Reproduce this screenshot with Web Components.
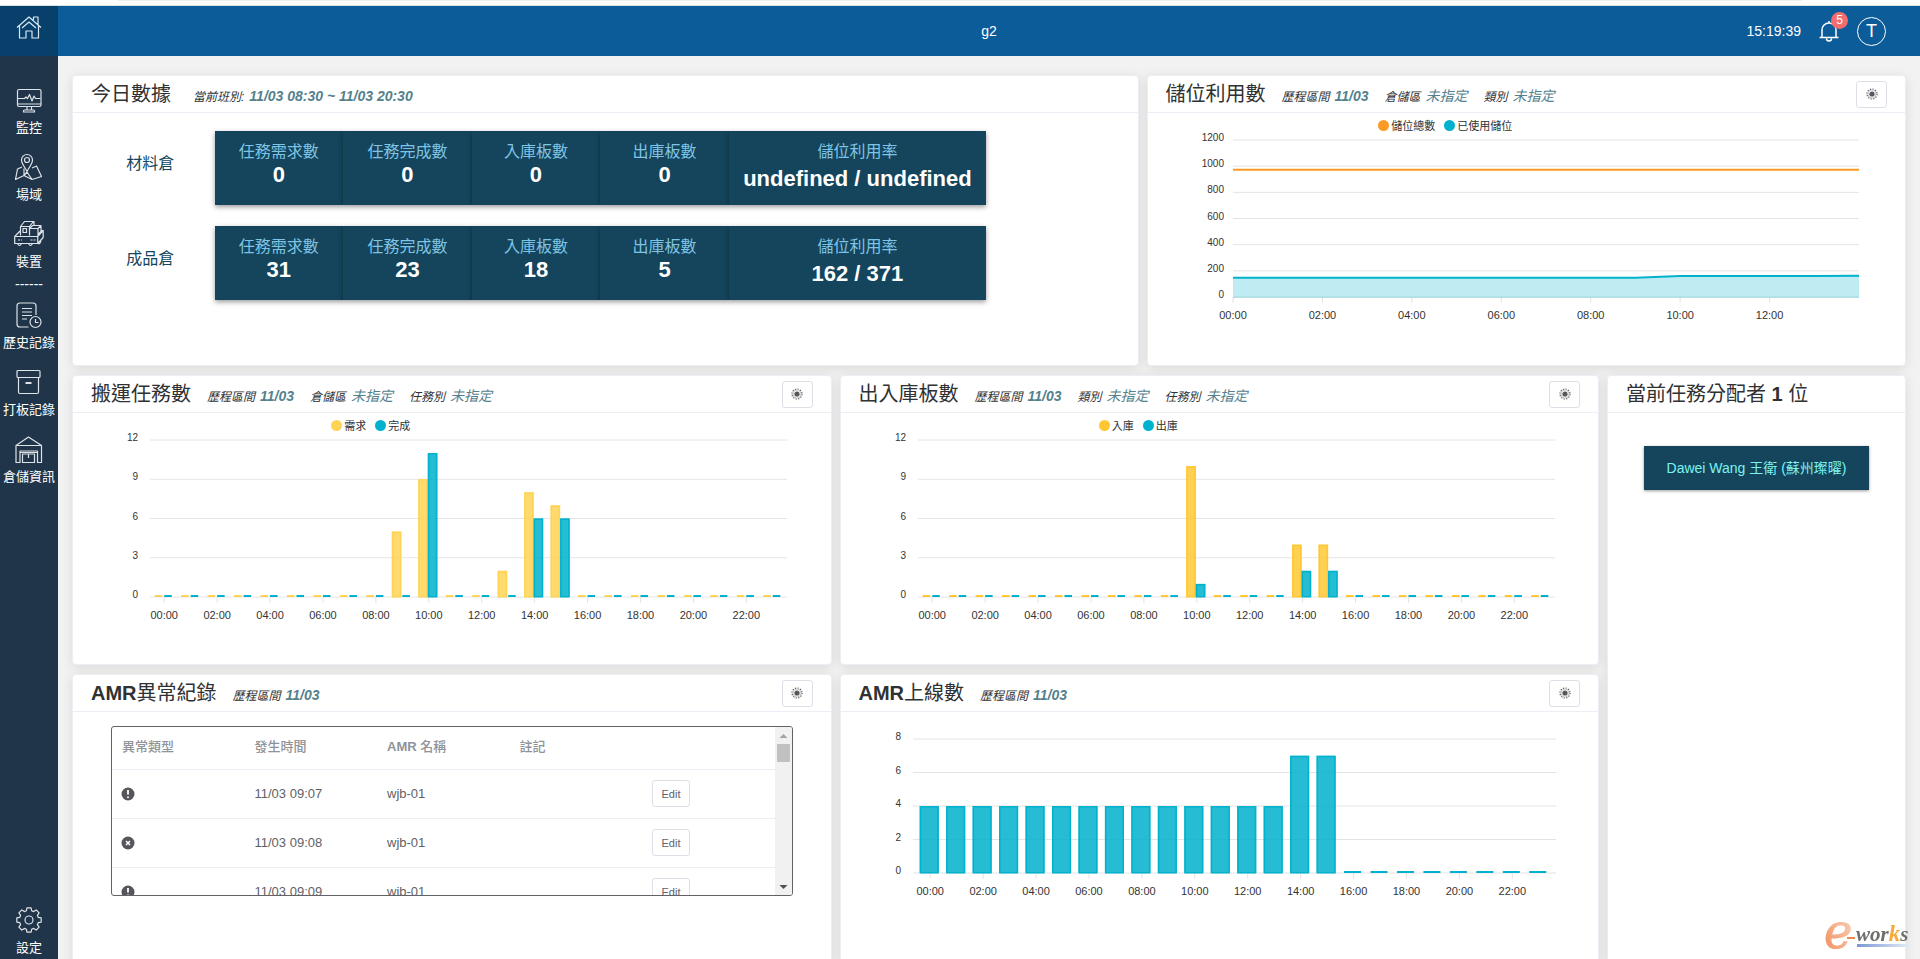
<!DOCTYPE html>
<html lang="zh-Hant">
<head>
<meta charset="utf-8">
<title>g2</title>
<style>
  html, body {
    margin: 0;
    height: 100%;
  }

  body {
    font-family: "Liberation Sans", "Noto Sans CJK TC", sans-serif;
    font-size: 14px;
    color: #303133;
    background: #f2f2f2;
    overflow: hidden;
  }
</style>
</head>
<body>

<app-shell>
  <app-header slot="header" heading="g2" time="15:19:39" alerts="5" user="T"></app-header>

  <side-nav slot="nav"></side-nav>

  <dash-card style="grid-column: span 14">
    <span slot="title">今日數據</span>
    <meta-item slot="meta" label="當前班別:" first><b>11/03 08:30 ~ 11/03 20:30</b></meta-item>
    <stat-board>
      <stat-row name="材料倉" demand="0" done="0" inbound="0" outbound="0" usage="undefined / undefined"></stat-row>
      <stat-row name="成品倉" demand="31" done="23" inbound="18" outbound="5" usage="162 / 371"></stat-row>
    </stat-board>
  </dash-card>

  <dash-card style="grid-column: span 10" filter>
    <span slot="title">儲位利用數</span>
    <meta-item slot="meta" label="歷程區間"><b>11/03</b></meta-item>
    <meta-item slot="meta" label="倉儲區">未指定</meta-item>
    <meta-item slot="meta" label="類別">未指定</meta-item>
    <line-chart max="1200" step="200" left="85" right="47" series='[
      {"name":"儲位總數","color":"#fb9a24","data":[973,973,973,973,973,973,973,973,973,973,973,973,973,973,973]},
      {"name":"已使用儲位","color":"#00b2cd","area":true,"data":[148,148,148,148,148,148,148,148,148,148,160,160,160,160,162]}
    ]'></line-chart>
  </dash-card>

  <dash-card style="grid-column: span 10" filter>
    <span slot="title">搬運任務數</span>
    <meta-item slot="meta" label="歷程區間"><b>11/03</b></meta-item>
    <meta-item slot="meta" label="倉儲區">未指定</meta-item>
    <meta-item slot="meta" label="任務別">未指定</meta-item>
    <bar-chart max="12" step="3" left="77" right="44" pad="1" series='[
      {"name":"需求","color":"#ffd355","data":[0,0,0,0,0,0,0,0,0,5,9,0,0,2,8,7,0,0,0,0,0,0,0,0]},
      {"name":"完成","color":"#00b2cd","data":[0,0,0,0,0,0,0,0,0,0,11,0,0,0,6,6,0,0,0,0,0,0,0,0]}
    ]'></bar-chart>
  </dash-card>

  <dash-card style="grid-column: span 10" filter>
    <span slot="title">出入庫板數</span>
    <meta-item slot="meta" label="歷程區間"><b>11/03</b></meta-item>
    <meta-item slot="meta" label="類別">未指定</meta-item>
    <meta-item slot="meta" label="任務別">未指定</meta-item>
    <bar-chart max="12" step="3" left="77" right="44" pad="1" series='[
      {"name":"入庫","color":"#ffc832","data":[0,0,0,0,0,0,0,0,0,0,10,0,0,0,4,4,0,0,0,0,0,0,0,0]},
      {"name":"出庫","color":"#00b2cd","data":[0,0,0,0,0,0,0,0,0,0,1,0,0,0,2,2,0,0,0,0,0,0,0,0]}
    ]'></bar-chart>
  </dash-card>

  <dash-card style="grid-column: span 4; grid-row: span 2">
    <span slot="title">當前任務分配者 <b>1</b> 位</span>
    <user-chip>Dawei Wang 王衛 (蘇州璨曜)</user-chip>
  </dash-card>

  <dash-card style="grid-column: span 10" filter>
    <span slot="title"><b>AMR</b>異常紀錄</span>
    <meta-item slot="meta" label="歷程區間"><b>11/03</b></meta-item>
    <error-table></error-table>
  </dash-card>

  <dash-card style="grid-column: span 10" filter>
    <span slot="title"><b>AMR</b>上線數</span>
    <meta-item slot="meta" label="歷程區間"><b>11/03</b></meta-item>
    <bar-chart max="8" step="2" left="72" right="43" pad="4" plot="134" nolegend series='[
      {"name":"AMR","color":"#00b2cd","data":[4,4,4,4,4,4,4,4,4,4,4,4,4,4,7,7,0,0,0,0,0,0,0,0]}
    ]'></bar-chart>
  </dash-card>

  <brand-mark slot="mark"></brand-mark>
</app-shell>

<script>
  // 8-tooth cog outline around (14, 14)
  function gearPath() {
    const pts = [];
    for (let i = 0; i < 8; i++) {
      const a = i * Math.PI / 4 - Math.PI / 2;
      [[-0.27, 9.6], [-0.17, 12.4], [0.17, 12.4], [0.27, 9.6]].forEach(([d, r]) => {
        pts.push((14 + r * Math.cos(a + d)).toFixed(1) + ' ' + (14 + r * Math.sin(a + d)).toFixed(1));
      });
    }
    return 'M' + pts.join('L') + 'z';
  }

  const ICONS = {
    home: '<path d="M2 14.500 14 4l12 10.500M4.500 12.500V25h6.500v-7h6v7h6.500V12.500M7 15l7-6 7 6M18.500 7V4h4.500v7.500"/>',
    monitor: '<rect x="2.500" y="3.500" width="23.500" height="17" rx="1.500"/><path d="M2.500 18h23.500M2.500 12.500h7l1.500-1.500 1.500 1.500 2-4 2.500 6.500 2-5 1.500 2.500h5M12 20.500v3.500M16.500 20.500v3.500M8.500 26v-1q0-1 1-1h9q1 0 1 1v1z"/>',
    map: '<path d="M12 18.500C10 14 6.500 11 6.500 7a5.500 5.500 0 0 1 11 0c0 4-3.500 7-5.500 11.500z"/><circle cx="12" cy="7" r="2.500"/><path d="M7 14l-4.500 2L.500 26.500 9 22.500l8 4 9.500-3-5-10.500-4.500 2M9 15.500v7M12 19l5 7.500M12 19l-3 3.500"/>',
    agv: '<path d="M0.700 16.500h23v7h-23zM0.700 16.500 6 11M23.700 16.500l5.500-6v7l-5.500 6M26.500 10.500h2.700M6.500 15.500v-9l4-5h9.500v4M6.500 6.500h9v9M15.500 6.500l4-5M9 8.500h3.500v4H9zM15.500 8.500h8.500v7M15.500 8.500l3-3H27v6l-3 3M24 8.500l3-3M4 20h2M7 20h1M16.500 20h2M19.500 20h2"/><path d="M3.500 23.500q2 4 4 0M14.500 23.500q2 4 4 0M24 23.500q2 1 3-3"/>',
    history: '<path d="M13.500 26H5q-3 0-3-3V5q0-3 3-3h13q3 0 3 3v9M7 7.500h10M7 11h10M7 14.500h10M7 18h5"/><circle cx="20.500" cy="21" r="5.500"/><path d="M20.500 18v3.500h3"/>',
    archive: '<rect x="2" y="2.500" width="23" height="7" rx="1"/><path d="M3.500 9.500V24q0 1.500 1.500 1.500h17q1.500 0 1.500-1.500V9.500"/><path d="M10.500 15h6" stroke-width="2"/>',
    warehouse: '<path d="M1 10.500 13.500 2 26.500 10.500V27.500h-4V16H5v11.500H1zM1 10.500h25.500M7.500 27.500V19h12v8.500zM13.500 19v4M5 17.500h17.500"/>',
    gear: '<path d="' + gearPath() + '"/><circle cx="14" cy="14" r="4"/>'
  };

  function icon(name, width = 28) {
    return `<svg width="${width}" height="28" viewBox="0 0 ${width} 28" fill="none" stroke="currentColor" stroke-width="1.2" stroke-linejoin="round" aria-hidden="true">${ICONS[name]}</svg>`;
  }

  class AppShell extends HTMLElement {
    constructor() {
      super();
      this.attachShadow({ mode: 'open' });
      this.shadowRoot.innerHTML = `
        <style>
          :host {
            display: flex;
            flex-direction: column;
            height: 100vh;
          }

          .strip {
            height: 5px;
            padding: 0 118px;
            background: #fff;
            border-bottom: 1px solid #d5e4e2;
          }

          .strip i {
            display: block;
            height: 1px;
            background: #efefef;
          }

          .body {
            flex: 1;
            min-height: 0;
            display: flex;
          }

          main {
            flex: 1;
            min-width: 0;
            overflow: hidden;
            padding: 19px 14px;
            display: grid;
            grid-template-columns: repeat(24, minmax(0, 1fr));
            grid-template-rows: 291px 290px;
            grid-auto-rows: 290px;
            gap: 9px 8px;
          }
        </style>
        <div class="strip"><i></i></div>
        <slot name="header"></slot>
        <div class="body">
          <slot name="nav"></slot>
          <main><slot></slot></main>
        </div>
        <slot name="mark"></slot>
      `;
    }
  }

  class AppHeader extends HTMLElement {
    constructor() {
      super();
      this.attachShadow({ mode: 'open' });
    }

    connectedCallback() {
      this.shadowRoot.innerHTML = `
        <style>
          :host {
            display: flex;
            height: 50px;
            color: #fff;
            background: #0c5c99;
          }

          .home {
            width: 58px;
            display: flex;
            justify-content: center;
            padding-top: 7px;
            box-sizing: border-box;
            color: #dbe7f0;
            background: #08406c;
          }

          .bar {
            flex: 1;
            display: grid;
            grid-template-columns: 1fr auto 1fr;
            align-items: center;
          }

          h1 {
            grid-column: 2;
            margin: 0;
            font-size: 14px;
            font-weight: normal;
          }

          .tools {
            display: flex;
            align-items: center;
            justify-content: flex-end;
            gap: 18px;
            padding-right: 34px;
          }

          button {
            padding: 0;
            border: 0;
            color: inherit;
            font: inherit;
            background: none;
            cursor: pointer;
          }

          .bell {
            position: relative;
            width: 20px;
            height: 22px;
          }

          .bell svg {
            display: block;
          }

          .badge {
            position: absolute;
            left: 12px;
            top: -8px;
            width: 17px;
            height: 17px;
            border-radius: 50%;
            font-size: 12px;
            line-height: 17px;
            text-align: center;
            background: #f56c6c;
          }

          .user {
            width: 29px;
            height: 29px;
            border: 1px solid #fff;
            border-radius: 50%;
            font-size: 18px;
          }
        </style>
        <a class="home" href="#" aria-label="Home">${icon('home')}</a>
        <div class="bar">
          <h1>${this.getAttribute('heading')}</h1>
          <div class="tools">
            <time>${this.getAttribute('time')}</time>
            <button class="bell" aria-label="Alerts">
              <svg width="20" height="22" viewBox="0 0 20 22" fill="none" stroke="#fff" stroke-width="1.5">
                <path d="M0.500 17.500h19M3 17.500V10a7 7 0 0 1 14 0v7.500M10 3V1M7.500 18.500a2.500 2.500 0 0 0 5 0"/>
              </svg>
              <span class="badge">${this.getAttribute('alerts')}</span>
            </button>
            <button class="user">${this.getAttribute('user')}</button>
          </div>
        </div>
      `;
    }
  }

  class NavItem extends HTMLElement {
    constructor() {
      super();
      this.attachShadow({ mode: 'open' });
    }

    connectedCallback() {
      const name = this.getAttribute('icon');
      this.shadowRoot.innerHTML = `
        <style>
          :host {
            display: block;
          }

          a {
            display: flex;
            flex-direction: column;
            align-items: center;
            gap: 5px;
            color: #fff;
            font-size: 13px;
            line-height: 17px;
            white-space: nowrap;
            text-decoration: none;
          }

          svg {
            color: #dde3e8;
          }
        </style>
        <a href="#">${icon(name, name === 'agv' ? 30 : 28)}<span><slot></slot></span></a>
      `;
    }
  }

  class SideNav extends HTMLElement {
    constructor() {
      super();
      this.attachShadow({ mode: 'open' });
      this.shadowRoot.innerHTML = `
        <style>
          :host {
            display: flex;
            flex-direction: column;
            width: 58px;
            box-sizing: border-box;
            padding: 30px 0 3px;
            color: #fff;
            background: #203549;
          }

          .group {
            display: flex;
            flex-direction: column;
            gap: 17px;
          }

          .divider {
            height: 31px;
            line-height: 29px;
            text-align: center;
          }

          .bottom {
            margin-top: auto;
          }
        </style>
        <nav class="group">
          <nav-item icon="monitor">監控</nav-item>
          <nav-item icon="map">場域</nav-item>
          <nav-item icon="agv">裝置</nav-item>
        </nav>
        <div class="divider">------</div>
        <nav class="group">
          <nav-item icon="history">歷史記錄</nav-item>
          <nav-item icon="archive">打板記錄</nav-item>
          <nav-item icon="warehouse">倉儲資訊</nav-item>
        </nav>
        <nav-item class="bottom" icon="gear">設定</nav-item>
      `;
    }
  }

  class DashCard extends HTMLElement {
    constructor() {
      super();
      this.attachShadow({ mode: 'open' });
      const filter = this.hasAttribute('filter') ? `
        <button aria-label="Filter">
          <svg width="12" height="12" viewBox="0 0 12 12" fill="none" stroke="#606266">
            <circle cx="6" cy="6" r="5" stroke-width="1.2" stroke-dasharray="1.3 1.3"/>
            <circle cx="6" cy="6" r="4" stroke="#a5a7aa" stroke-width="0.6"/>
            <circle cx="6" cy="6" r="2.6" fill="#55575a" stroke="none"/>
          </svg>
        </button>` : '';
      this.shadowRoot.innerHTML = `
        <style>
          :host {
            display: flex;
            flex-direction: column;
            box-sizing: border-box;
            border: 1px solid #ebeef5;
            border-radius: 4px;
            background: #fff;
            box-shadow: 0 2px 12px rgba(0, 0, 0, 0.1);
          }

          header {
            display: flex;
            align-items: center;
            height: 36px;
            padding: 0 18px;
            border-bottom: 1px solid #ebeef5;
          }

          .text {
            flex: 1;
            display: flex;
            align-items: baseline;
            gap: 16px;
          }

          h2 {
            margin: 0;
            font-size: 20px;
            font-weight: normal;
            line-height: 34px;
          }

          button {
            display: flex;
            align-items: center;
            justify-content: center;
            width: 31px;
            height: 27px;
            padding: 0;
            border: 1px solid #dcdfe6;
            border-radius: 3px;
            background: #fff;
            cursor: pointer;
          }
        </style>
        <header>
          <div class="text">
            <h2><slot name="title"></slot></h2>
            <slot name="meta"></slot>
          </div>
          ${filter}
        </header>
        <slot></slot>
      `;
    }
  }

  class MetaItem extends HTMLElement {
    constructor() {
      super();
      this.attachShadow({ mode: 'open' });
      this.shadowRoot.innerHTML = `
        <style>
          :host {
            display: flex;
            align-items: baseline;
            gap: 5px;
            font-style: italic;
            white-space: nowrap;
          }

          :host([first]) {
            margin-left: 6px;
          }

          .label {
            font-size: 12px;
          }

          .value {
            color: #54818d;
          }
        </style>
        <span class="label">${this.getAttribute('label')}</span>
        <span class="value"><slot></slot></span>
      `;
    }
  }

  class StatBoard extends HTMLElement {
    constructor() {
      super();
      this.attachShadow({ mode: 'open' });
      this.shadowRoot.innerHTML = `
        <style>
          :host {
            display: flex;
            flex-direction: column;
            gap: 21px;
            max-width: 900px;
            padding: 18px 13px;
          }
        </style>
        <slot></slot>
      `;
    }
  }

  class StatRow extends HTMLElement {
    constructor() {
      super();
      this.attachShadow({ mode: 'open' });
    }

    connectedCallback() {
      const cells = [
        ['任務需求數', 'demand'],
        ['任務完成數', 'done'],
        ['入庫板數', 'inbound'],
        ['出庫板數', 'outbound'],
        ['儲位利用率', 'usage']
      ];
      this.shadowRoot.innerHTML = `
        <style>
          :host {
            display: grid;
            grid-template-columns: repeat(5, minmax(0, 1fr)) minmax(0, 2fr);
            text-align: center;
            font-size: 16px;
          }

          .name {
            line-height: 66px;
            color: #14455c;
          }

          .cell {
            height: 64px;
            padding-top: 10px;
            line-height: 22px;
            color: #7fc4e4;
            background: #14455c;
            box-shadow: 0 2px 5px rgba(0, 0, 0, 0.4);
            white-space: nowrap;
          }

          .cell b {
            display: block;
            font-size: 22px;
            line-height: 24px;
            color: #fff;
          }

          .usage b {
            line-height: 32px;
          }
        </style>
        <span class="name">${this.getAttribute('name')}</span>
        ${cells.map(([label, key]) => `<div class="cell ${key}">${label}<b>${this.getAttribute(key)}</b></div>`).join('')}
      `;
    }
  }

  // Shared frame for both charts: legend, grid lines, y and x labels
  class BaseChart extends HTMLElement {
    constructor() {
      super();
      this.attachShadow({ mode: 'open' });
    }

    connectedCallback() {
      this.series = JSON.parse(this.getAttribute('series'));
      const items = this.hasAttribute('nolegend') ? [] : this.series;
      this.shadowRoot.innerHTML = `
        <style>
          :host {
            display: block;
            font-size: 11px;
          }

          .legend {
            display: flex;
            justify-content: center;
            align-items: center;
            gap: 9px;
            height: 24px;
            padding-right: 162px;
          }

          .legend span {
            display: flex;
            align-items: center;
            gap: 2px;
          }

          .legend i {
            width: 11px;
            height: 11px;
            border-radius: 50%;
          }

          svg {
            display: block;
            width: 100%;
            height: 200px;
            overflow: visible;
          }

          text {
            fill: #333;
          }

          .y {
            font-size: 10px;
            text-anchor: end;
          }

          .x {
            text-anchor: middle;
          }
        </style>
        <div class="legend">
          ${items.map(s => `<span><i style="background: ${s.color}"></i>${s.name}</span>`).join('')}
        </div>
        <svg></svg>
      `;
      this.draw();
      this.observer = new ResizeObserver(() => this.draw());
      this.observer.observe(this);
    }

    disconnectedCallback() {
      this.observer.disconnect();
    }

    num(name, fallback = 0) {
      return this.hasAttribute(name) ? Number(this.getAttribute(name)) : fallback;
    }

    draw() {
      const x0 = this.num('left');
      const x1 = this.clientWidth - this.num('right');
      const top = 3;
      const bottom = top + this.num('plot', 157);
      const max = this.num('max');
      const y = v => bottom - v / max * (bottom - top);
      let out = '';

      for (let v = 0; v <= max; v += this.num('step')) {
        out += `<path d="M${x0} ${y(v)}H${x1}" stroke="#e4e4e4"/>`;
        out += `<text class="y" x="${x0 - this.labelGap}" y="${y(v) + 1}">${v}</text>`;
      }

      const xs = this.positions(x0, x1);
      xs.forEach((x, i) => {
        if (i % 2 || i > this.lastLabel) return;
        out += `<path d="M${x} ${bottom}v6" stroke="#e4e4e4"/>`;
        out += `<text class="x" x="${x}" y="${bottom + 22}">${String(i).padStart(2, '0')}:00</text>`;
      });

      out += this.plot(xs, y, bottom);
      this.shadowRoot.querySelector('svg').innerHTML = out;
    }
  }

  class LineChart extends BaseChart {
    labelGap = 9;
    lastLabel = 12;

    positions(x0, x1) {
      const n = this.series[0].data.length;
      return this.series[0].data.map((v, i) => x0 + (x1 - x0) * i / (n - 1));
    }

    plot(xs, y, bottom) {
      return this.series.map(s => {
        const line = s.data.map((v, i) => `${xs[i]} ${y(v)}`).join('L');
        const area = s.area
          ? `<path d="M${xs[0]} ${bottom + 1}L${line}V${bottom + 1}z" fill="${s.color}" fill-opacity="0.25"/>`
          : '';
        return `${area}<path d="M${line}" fill="none" stroke="${s.color}" stroke-width="2"/>`;
      }).join('');
    }
  }

  class BarChart extends BaseChart {
    labelGap = 12;
    lastLabel = 23;

    positions(x0, x1) {
      const pad = this.num('pad');
      this.band = (x1 - x0 - 2 * pad) / 24;
      return Array.from({ length: 24 }, (_, i) => x0 + pad + this.band * (i + 0.5));
    }

    // bars of one hour stand side by side, just left of the tick's centre
    plot(xs, y, bottom) {
      const count = this.series.length;
      const width = this.band * 0.72 / count;
      let out = '';
      this.series.forEach((s, k) => {
        s.data.forEach((v, i) => {
          const left = xs[i] - 1 + (k - count / 2) * width;
          if (v === 0) {
            out += `<path d="M${left + 1} ${bottom - 1}h${width - 2}" stroke="${s.color}" stroke-width="2"/>`;
            return;
          }
          out += `<rect x="${left}" y="${y(v)}" width="${width}" height="${bottom - y(v)}" fill="${s.color}" fill-opacity="0.85"/>`;
          out += `<rect x="${left + 0.75}" y="${y(v) + 0.75}" width="${width - 1.5}" height="${bottom - y(v) - 1}" fill="none" stroke="${s.color}" stroke-width="1.5"/>`;
        });
      });
      return out;
    }
  }

  class UserChip extends HTMLElement {
    constructor() {
      super();
      this.attachShadow({ mode: 'open' });
      this.shadowRoot.innerHTML = `
        <style>
          :host {
            display: block;
            margin: 33px 36px;
            line-height: 44px;
            text-align: center;
            white-space: nowrap;
            color: #7df3ee;
            background: #14455c;
            box-shadow: 0 1px 3px rgba(0, 0, 0, 0.4);
          }
        </style>
        <slot></slot>
      `;
    }
  }

  class ErrorTable extends HTMLElement {
    constructor() {
      super();
      this.attachShadow({ mode: 'open' });
      const rows = [
        ['warn', '11/03 09:07', 'wjb-01'],
        ['fail', '11/03 09:08', 'wjb-01'],
        ['warn', '11/03 09:09', 'wjb-01']
      ];
      const marks = {
        warn: '<path d="M7 3v4.500M7 9.500v1.500" stroke="#fff" stroke-width="1.800"/>',
        fail: '<path d="M5 5l4 4M9 5l-4 4" stroke="#fff" stroke-width="1.500"/>'
      };
      this.shadowRoot.innerHTML = `
        <style>
          :host {
            display: flex;
            height: 168px;
            margin: 14px 38px 0;
            border: 1px solid #606266;
            border-radius: 3px;
            overflow: hidden;
          }

          .scroll {
            flex: 1;
            overflow: hidden;
          }

          table {
            width: 100%;
            table-layout: fixed;
            border-collapse: collapse;
            font-size: 13px;
            color: #606266;
          }

          th, td {
            height: 49px;
            padding: 0 10px;
            box-sizing: border-box;
            text-align: left;
            border-bottom: 1px solid #ebeef5;
          }

          th {
            height: 42px;
            padding-bottom: 4px;
            font-weight: 500;
            color: #909399;
          }

          td:first-child {
            padding-left: 9px;
          }

          td svg {
            display: block;
          }

          td button {
            display: block;
            width: 38px;
            height: 27px;
            padding: 0;
            border: 1px solid #dcdfe6;
            border-radius: 3px;
            font: inherit;
            font-size: 11px;
            color: #606266;
            background: #fff;
            cursor: pointer;
          }

          .rail {
            display: flex;
            flex-direction: column;
            align-items: center;
            width: 17px;
            background: #f1f1f1;
          }

          .thumb {
            width: 13px;
            height: 18px;
            background: #c1c1c1;
          }

          .down {
            margin-top: auto;
          }
        </style>
        <div class="scroll">
          <table>
            <thead>
              <tr><th>異常類型</th><th>發生時間</th><th><b>AMR</b> 名稱</th><th>註記</th><th></th></tr>
            </thead>
            <tbody>
              ${rows.map(([kind, time, name]) => `
                <tr>
                  <td><svg width="14" height="14" viewBox="0 0 14 14"><circle cx="7" cy="7" r="6.500" fill="#55575b"/>${marks[kind]}</svg></td>
                  <td>${time}</td>
                  <td>${name}</td>
                  <td></td>
                  <td><button>Edit</button></td>
                </tr>`).join('')}
            </tbody>
          </table>
        </div>
        <div class="rail">
          <svg width="17" height="17"><path d="M4.500 11h8l-4-4z" fill="#a3a3a3"/></svg>
          <div class="thumb"></div>
          <svg class="down" width="17" height="17"><path d="M4.500 7h8l-4 4z" fill="#505050"/></svg>
        </div>
      `;
    }
  }

  class BrandMark extends HTMLElement {
    constructor() {
      super();
      this.attachShadow({ mode: 'open' });
      this.shadowRoot.innerHTML = `
        <style>
          :host {
            position: fixed;
            right: 7px;
            bottom: 6px;
            font-family: "Liberation Serif", serif;
            font-weight: bold;
            font-style: italic;
          }

          svg {
            display: block;
            overflow: visible;
          }

          .initial {
            font-family: "DejaVu Serif", serif;
            font-weight: normal;
          }
        </style>
        <svg width="88" height="34" viewBox="0 0 88 34">
          <defs>
            <linearGradient id="e" x1="0" x2="1" y1="1" y2="0">
              <stop offset="0" stop-color="#f08a55"/>
              <stop offset="1" stop-color="#fbd9c5"/>
            </linearGradient>
            <linearGradient id="u">
              <stop offset="0" stop-color="#7a97d4"/>
              <stop offset="1" stop-color="#e9eef8"/>
            </linearGradient>
          </defs>
          <text class="initial" x="-1" y="29" font-size="48" fill="url(#e)" stroke="url(#e)">e</text>
          <rect x="22" y="18" width="8" height="2" fill="#ee8a4a"/>
          <text x="31" y="22" font-size="21" fill="#706d6a">wor<tspan fill="#f7a93b" font-size="23">k</tspan>s</text>
          <rect x="32" y="25" width="54" height="3" fill="url(#u)"/>
        </svg>
      `;
    }
  }

  customElements.define('app-shell', AppShell);
  customElements.define('app-header', AppHeader);
  customElements.define('nav-item', NavItem);
  customElements.define('side-nav', SideNav);
  customElements.define('dash-card', DashCard);
  customElements.define('meta-item', MetaItem);
  customElements.define('stat-board', StatBoard);
  customElements.define('stat-row', StatRow);
  customElements.define('line-chart', LineChart);
  customElements.define('bar-chart', BarChart);
  customElements.define('user-chip', UserChip);
  customElements.define('error-table', ErrorTable);
  customElements.define('brand-mark', BrandMark);
</script>
</body>
</html>
